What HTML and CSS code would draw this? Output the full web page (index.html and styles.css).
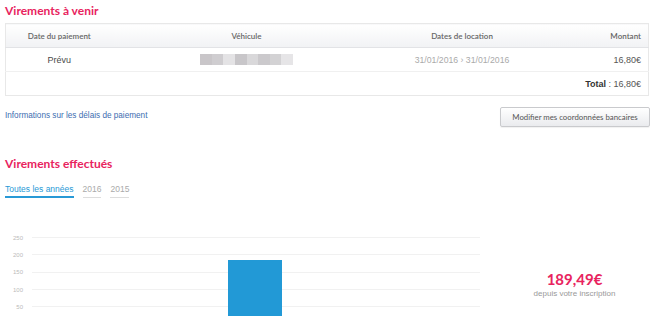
FILE: index.html
```html
<!DOCTYPE html>
<html lang="fr">
<head>
<meta charset="utf-8">
<title>Virements</title>
<link rel="stylesheet" href="styles.css">
</head>
<body>
<div class="page">
  <h2 class="title">Virements à venir</h2>
  <table class="pay-table">
    <colgroup>
      <col class="c1"><col class="c2"><col class="c3"><col class="c4">
    </colgroup>
    <thead>
      <tr>
        <th class="center">Date du paiement</th>
        <th class="center">Véhicule</th>
        <th class="center">Dates de location</th>
        <th class="right">Montant</th>
      </tr>
    </thead>
    <tbody>
      <tr class="row">
        <td class="center status">Prévu</td>
        <td class="center"><span class="blur"><i class="b1"></i><i class="b2"></i><i class="b3"></i><i class="b4"></i><i class="b5"></i><i class="b6"></i><i class="b7"></i><i class="b8"></i></span></td>
        <td class="center dates">31/01/2016 › 31/01/2016</td>
        <td class="right amount">16,80€</td>
      </tr>
      <tr class="row total-row">
        <td colspan="4" class="right amount"><b>Total</b> : 16,80€</td>
      </tr>
    </tbody>
  </table>

  <div class="info-bar">
    <a class="info-link" href="#">Informations sur les délais de paiement</a>
    <button class="btn">Modifier mes coordonnées bancaires</button>
  </div>

  <h2 class="title title-done">Virements effectués</h2>
  <nav class="tabs">
    <a class="tab active" href="#">Toutes les années</a>
    <a class="tab" href="#">2016</a>
    <a class="tab" href="#">2015</a>
  </nav>

  <div class="stats">
    <div class="chart">
      <div class="grid-row"><span class="lbl">250</span><span class="line"></span></div>
      <div class="grid-row"><span class="lbl">200</span><span class="line"></span></div>
      <div class="grid-row"><span class="lbl">150</span><span class="line"></span></div>
      <div class="grid-row"><span class="lbl">100</span><span class="line"></span></div>
      <div class="grid-row"><span class="lbl">50</span><span class="line"></span></div>
      <div class="bar" style="height: 66px"></div>
    </div>
    <div class="total">
      <div class="total-value">189,49€</div>
      <div class="total-label">depuis votre inscription</div>
    </div>
  </div>
</div>
</body>
</html>
```

FILE: styles.css
```css
html, body {
  margin: 0;
  padding: 0;
  background: #fff;
  overflow: hidden;
}
body {
  font-family: "Liberation Sans", Arial, sans-serif;
  font-size: 9px;
  color: #444;
}
.page {
  padding: 0 2px 0 5px;
  width: 643px;
}
.title {
  margin: 0;
  padding-top: 3px;
  height: 20px;
  font-family: Lato, "Open Sans", sans-serif;
  font-weight: 700;
  font-size: 12px;
  color: #e8235e;
  line-height: 16px;
}
.pay-table {
  width: 643px;
  border-collapse: collapse;
  border: 1px solid #e8e8e8;
  table-layout: fixed;
}
.c1 { width: 107px; }
.c2 { width: 268px; }
.c3 { width: 163px; }
.c4 { width: 105px; }
.pay-table th {
  height: 23px;
  padding: 0 7px;
  font-family: Lato, "Open Sans", sans-serif;
  font-weight: 600;
  font-size: 8px;
  color: #666;
  background: linear-gradient(#ffffff, #f1f2f4);
  border-bottom: 1px solid #e2e3e6;
}
.pay-table td {
  height: 23px;
  padding: 0 7px;
  border-bottom: 1px solid #f0f0f0;
}
.pay-table .total-row td {
  height: 23px;
  border-bottom: none;
}
.center { text-align: center; }
.right { text-align: right; }
.status { color: #4a4a4a; }
.dates { color: #aaa; font-size: 8.7px; }
.amount { color: #555; }
.amount b { color: #333; }
.blur {
  display: inline-flex;
  vertical-align: middle;
  height: 11px;
  width: 93px;
}
.blur i { flex: 1; height: 11px; }
.b1 { background: #c9c6c9; }
.b2 { background: #cfcdd0; }
.b3 { background: #e4e3e5; }
.b4 { background: #c8c6c9; }
.b5 { background: #d9d8da; }
.b6 { background: #cbc9cc; }
.b7 { background: #d3d2d4; }
.b8 { background: #e6e5e7; }

.info-bar {
  display: flex;
  justify-content: space-between;
  align-items: center;
  margin-top: 11px;
  margin-right: -2px;
}
.info-link {
  color: #3d6db0;
  text-decoration: none;
  font-size: 8.2px;
  margin-top: -3px;
}
.btn {
  height: 20px;
  width: 150px;
  padding: 0;
  font-family: Lato, "Open Sans", sans-serif;
  font-size: 7.8px;
  color: #555;
  background: linear-gradient(#ffffff, #eaebee);
  border: 1px solid #c9cacd;
  border-radius: 2px;
  box-shadow: 0 1px 1px rgba(0,0,0,0.06);
}
.title-done {
  margin-top: 26px;
}
.tabs {
  display: flex;
  gap: 9px;
  margin-top: 8px;
}
.tab {
  font-size: 8.5px;
  color: #aaa;
  text-decoration: none;
  line-height: 11px;
  border-bottom: 1px solid #ddd;
  padding-bottom: 2px;
}
.tab.active {
  color: #2899d6;
  border-bottom: 2px solid #2899d6;
  padding-bottom: 1px;
}
.stats {
  display: flex;
  margin-top: 31px;
}
.chart {
  position: relative;
  width: 475px;
  height: 90px;
}
.grid-row {
  display: flex;
  align-items: center;
  height: 17.3px;
}
.lbl {
  width: 18px;
  text-align: right;
  font-size: 6px;
  color: #bbb;
  margin-right: 9px;
}
.line {
  flex: 1;
  height: 1px;
  background: #f1f1f1;
}
.bar {
  position: absolute;
  left: 223px;
  top: 31px;
  width: 54px;
  background: #2299d6;
}
.total {
  flex: 1;
  text-align: center;
  padding-top: 42px;
  padding-left: 21px;
}
.total-value {
  font-family: Lato, "Open Sans", sans-serif;
  font-weight: 700;
  font-size: 15px;
  color: #e8235e;
  line-height: 16px;
}
.total-label {
  font-size: 8px;
  color: #999;
  margin-top: 2px;
}
```
